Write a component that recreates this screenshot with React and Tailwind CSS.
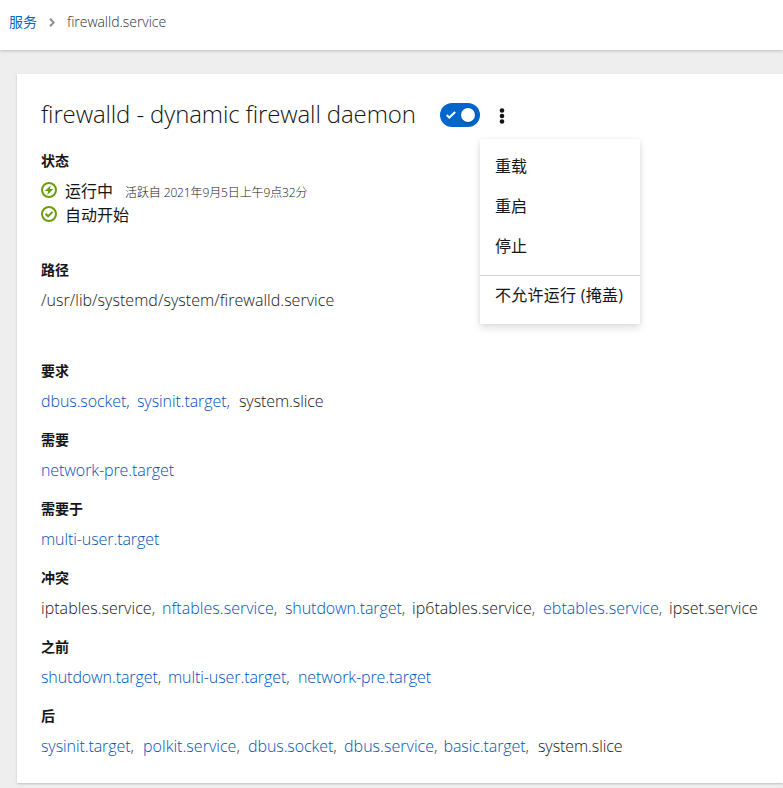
import { useState } from "react";

// name, is a link, column width
const relations = [
    { label: "要求", units: [["dbus.socket", true, "w-[96px]"], ["sysinit.target", true, "w-[102px]"], ["system.slice", false, ""]] },
    { label: "需要", units: [["network-pre.target", true, ""]] },
    { label: "需要于", units: [["multi-user.target", true, ""]] },
    { label: "冲突", units: [["iptables.service", false, "w-[121px]"], ["nftables.service", true, "w-[123px]"], ["shutdown.target", true, "w-[127px]"], ["ip6tables.service", false, "w-[131px]"], ["ebtables.service", true, "w-[126px]"], ["ipset.service", false, ""]] },
    { label: "之前", units: [["shutdown.target", true, "w-[127px]"], ["multi-user.target", true, "w-[130px]"], ["network-pre.target", true, ""]] },
    { label: "后", units: [["sysinit.target", true, "w-[102px]"], ["polkit.service", true, "w-[105px]"], ["dbus.socket", true, "w-[96px]"], ["dbus.service", true, "w-[99.5px]"], ["basic.target", true, "w-[94.5px]"], ["system.slice", false, ""]] },
];

function RunningIcon() {
    return (
        <svg className="w-4 h-4 shrink-0" viewBox="0 0 16 16">
            <circle cx="8" cy="8" r="7" fill="none" stroke="#6a9e10" strokeWidth="2" />
            <path d="M9.8 3.2 3.8 9h3.4l-1 4 6.2-5.9H8.8z" fill="#6a9e10" />
        </svg>
    );
}

function EnabledIcon() {
    return (
        <svg className="w-4 h-4 shrink-0" viewBox="0 0 16 16" fill="none" stroke="#6a9e10" strokeWidth="2">
            <circle cx="8" cy="8" r="7" />
            <path d="m4.5 7.7 2.6 2.6 4.5-4.4" />
        </svg>
    );
}

function Label({ children }) {
    return <div className="h-[21px] leading-[19px] text-sm font-bold">{children}</div>;
}

function Relation({ label, units }) {
    return (
        <div>
            <Label>{label}</Label>
            <div className="mt-2 flex h-6 leading-[22px] whitespace-nowrap">
                {units.map(([name, link, width], i) => (
                    <span key={name} className={`shrink-0 ${width} ${name.endsWith("service") ? "tracking-[0.04px]" : "tracking-[-0.08px]"}`}>
                        {link ? <a className="text-[#0052b8]" href="#">{name}</a> : name}
                        {i < units.length - 1 && <span className="text-[#3c3f42]">,</span>}
                    </span>
                ))}
            </div>
        </div>
    );
}

export default function App() {
    const [enabled, setEnabled] = useState(true);

    return (
        <div className="h-[788px] overflow-hidden flex flex-col bg-[#eeeeee] text-[#151515] text-base font-light font-['Open_Sans','Noto_Sans_CJK_SC',sans-serif]">
            <header className="h-[50px] shrink-0 flex items-start pt-[11px] pl-[9px] bg-white text-sm leading-[21px] shadow-[0_1px_3px_rgba(0,0,0,0.2)]">
                <a className="text-[#0066cc] font-normal" href="#">服务</a>
                <svg className="w-[6px] h-[9px] mt-[7px] ml-[12px] mr-[12px]" viewBox="0 0 6 9" fill="none" stroke="#8a8d90" strokeWidth="2">
                    <path d="m1 .8 3.7 3.7L1 8.2" />
                </svg>
                <span className="text-[#2f3133] tracking-[-0.03px]">firewalld.service</span>
            </header>

            <main className="mt-6 ml-[17px] h-[709px] shrink-0 pl-6 pt-6 bg-white shadow-[0_1px_2px_rgba(0,0,0,0.2)]">
                <div className="flex h-[32px]">
                    <h1 className="w-[399px] text-2xl leading-[31px] tracking-[-0.12px] whitespace-nowrap">firewalld - dynamic firewall daemon</h1>
                    <button className="mt-[5px] w-10 h-6 rounded-full bg-[#0066cc] flex items-center pl-[6px] pr-[5px] justify-between" onClick={() => setEnabled(!enabled)}>
                        <svg className="w-[10px] h-[8px]" viewBox="0 0 10 8" fill="none" stroke="white" strokeWidth="2">
                            <path d="m.7 4 2.6 2.5L9.2.9" />
                        </svg>
                        <span className="w-[14px] h-[14px] rounded-full bg-white shadow-[0_1px_3px_rgba(0,0,0,0.3)]"></span>
                    </button>
                    <div className="relative ml-[19px] mt-[10px] w-[6px] h-4">
                        <svg className="w-[6px] h-4" viewBox="0 0 6 16" fill="#151515">
                            <circle cx="3" cy="2.5" r="2.3" />
                            <circle cx="3" cy="8" r="2.3" />
                            <circle cx="3" cy="13.5" r="2.3" />
                        </svg>
                        <div className="absolute left-[-19px] top-[31px] w-40 h-[185px] py-2 bg-white font-normal whitespace-nowrap shadow-[0_4px_8px_rgba(3,3,3,0.12),0_0_4px_rgba(3,3,3,0.06)]">
                            <div className="h-10 leading-[39px] px-[15px]">重载</div>
                            <div className="h-10 leading-[39px] px-[15px]">重启</div>
                            <div className="h-10 leading-[39px] px-[15px]">停止</div>
                            <div className="mt-2 h-px bg-[#d2d2d2]"></div>
                            <div className="h-10 leading-[39px] px-[15px] tracking-[0.25px]">不允许运行 (掩盖)</div>
                        </div>
                    </div>
                </div>

                <div className="mt-[21px]">
                    <Label>状态</Label>
                    <div className="mt-2 h-6 flex leading-[22px]">
                        <div className="mt-[2px] mr-2"><RunningIcon /></div>
                        <span className="font-normal">运行中</span>
                        <span className="ml-3 text-xs leading-[25px] tracking-[-0.12px] text-[#151515]">活跃自 2021年9月5日上午9点32分</span>
                    </div>
                    <div className="h-6 flex leading-[22px]">
                        <div className="mt-[2px] mr-2"><EnabledIcon /></div>
                        <span className="font-normal">自动开始</span>
                    </div>
                </div>

                <div className="mt-8">
                    <Label>路径</Label>
                    <div className="mt-2 h-6 leading-[22px] tracking-[0.04px]">/usr/lib/systemd/system/firewalld.service</div>
                </div>

                <div className="mt-12 flex flex-col gap-4">
                    {relations.map((r) => <Relation key={r.label} label={r.label} units={r.units} />)}
                </div>
            </main>
        </div>
    );
}
